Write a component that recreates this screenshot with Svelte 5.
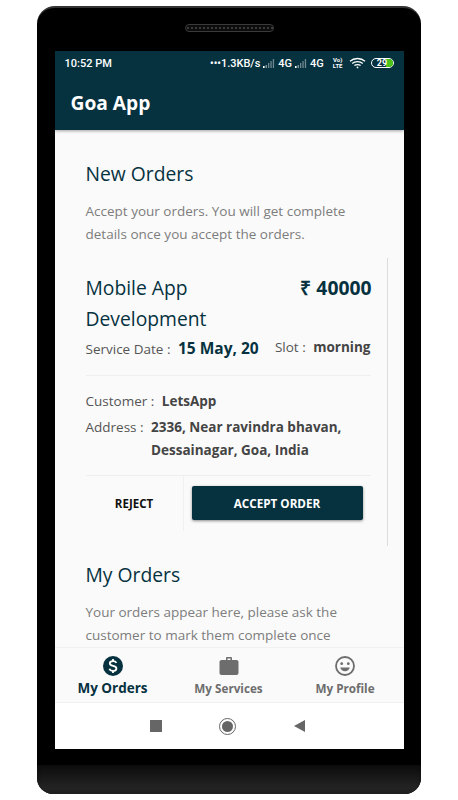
<script>
  const tabs = [
    { label: 'My Orders', icon: 'dollar', active: true },
    { label: 'My Services', icon: 'case', active: false },
    { label: 'My Profile', icon: 'smile', active: false }
  ];
  const bars = [0, 1];
</script>

<div class="page">
  <div class="phone">
    <div class="speaker"></div>
    <div class="screen">
      <header class="appbar">
        <div class="status">
          <span class="time">10:52 PM</span>
          <div class="indicators">
            <span class="speed"><span class="dots">•••</span>1.3KB/s</span>
            {#each bars as b}
              <svg class="signal" width="12" height="11" viewBox="0 0 12 11">
                <rect x="0" y="8" width="1.6" height="2" fill="#fff" />
                <rect x="2.6" y="7" width="1.3" height="3" fill="#8a9ea5" />
                <rect x="5" y="5" width="1.3" height="5" fill="#6f878f" />
                <rect x="7.4" y="3" width="1.3" height="7" fill="#6f878f" />
                <rect x="9.8" y="1" width="1.3" height="9" fill="#6f878f" />
              </svg>
              <span class="net">4G</span>
            {/each}
            <span class="volte">Vo)<br />LTE</span>
            <svg class="wifi" width="17" height="12" viewBox="0 0 17 12" fill="none" stroke="#fff" stroke-width="1.3">
              <path d="M1 4.2 C5 0.6 12 0.6 16 4.2" />
              <path d="M3.2 6.4 C6 4 11 4 13.8 6.4" />
              <path d="M5.4 8.6 C7 7.3 10 7.3 11.6 8.6" />
              <circle cx="8.5" cy="10.4" r="0.9" fill="#fff" stroke="none" />
            </svg>
            <span class="battery"><span class="level"></span><span class="pct">29</span></span>
          </div>
        </div>
        <div class="title">Goa App</div>
      </header>

      <main class="content">
        <h2>New Orders</h2>
        <p class="hint">Accept your orders. You will get complete details once you accept the orders.</p>

        <section class="card">
          <div class="card-head">
            <div class="service">Mobile App Development</div>
            <div class="price">₹ 40000</div>
          </div>
          <div class="dates">
            <span class="field">Service Date : <b class="date">15 May, 20</b></span>
            <span class="field slot">Slot : <b>morning</b></span>
          </div>
          <div class="customer">
            <div class="row"><span class="field">Customer :</span><b>LetsApp</b></div>
            <div class="row address"><span class="field">Address :</span><b>2336, Near ravindra bhavan, Dessainagar, Goa, India</b></div>
          </div>
          <div class="actions">
            <button class="reject">REJECT</button>
            <div class="accept-wrap"><button class="accept">ACCEPT ORDER</button></div>
          </div>
        </section>

        <h2 class="second">My Orders</h2>
        <p class="hint">Your orders appear here, please ask the customer to mark them complete once</p>
      </main>

      <nav class="tabs">
        {#each tabs as tab}
          <div class="tab" class:active={tab.active}>
            {#if tab.icon === 'dollar'}
              <svg width="22" height="22" viewBox="0 0 22 22">
                <circle cx="11" cy="11" r="10" fill="#06323f" />
                <path d="M14.4 7.9 C13.8 6.6 12.6 6.1 11 6.1 C9.2 6.1 7.8 7 7.8 8.5 C7.8 11.6 14.4 10.2 14.4 13.4 C14.4 15 12.9 15.9 11 15.9 C9.2 15.9 7.9 15.1 7.4 13.8" fill="none" stroke="#fff" stroke-width="1.8" />
                <path d="M11 3.9 V18.1" stroke="#fff" stroke-width="1.8" stroke-dasharray="2.4 9.4" />
              </svg>
            {:else if tab.icon === 'case'}
              <svg width="22" height="22" viewBox="0 0 22 22">
                <path d="M8 5 V3.2 C8 2.5 8.5 2 9.2 2 H12.8 C13.5 2 14 2.5 14 3.2 V5 H18.5 C19.6 5 20.5 5.9 20.5 7 V18 C20.5 19.1 19.6 20 18.5 20 H3.5 C2.4 20 1.5 19.1 1.5 18 V7 C1.5 5.9 2.4 5 3.5 5 Z M9.5 5 H12.5 V3.5 H9.5 Z" fill="#6d6d6d" fill-rule="evenodd" />
              </svg>
            {:else}
              <svg width="22" height="22" viewBox="0 0 22 22">
                <circle cx="11" cy="11" r="9" fill="none" stroke="#6d6d6d" stroke-width="1.8" />
                <circle cx="7.7" cy="8.7" r="1.4" fill="#6d6d6d" />
                <circle cx="14.3" cy="8.7" r="1.4" fill="#6d6d6d" />
                <path d="M6.2 12.6 H15.8 C15.2 15 13.3 16.3 11 16.3 C8.7 16.3 6.8 15 6.2 12.6 Z" fill="#6d6d6d" />
              </svg>
            {/if}
            <span>{tab.label}</span>
          </div>
        {/each}
      </nav>

      <div class="softkeys">
        <span class="sq"></span>
        <span class="home"><span></span></span>
        <span class="back"></span>
      </div>
    </div>
    <div class="chin"></div>
  </div>
</div>

<style>
  :global(body) {
    margin: 0;
    background: #fff;
  }

  .page {
    width: 458px;
    height: 800px;
    padding: 6px 0 0 37px;
    box-sizing: border-box;
    font-family: "Open Sans", sans-serif;
  }

  .phone {
    width: 384px;
    height: 788px;
    box-sizing: border-box;
    background: #000;
    border-top: 2px solid #333;
    border-radius: 18px 18px 16px 16px;
    display: flex;
    flex-direction: column;
    align-items: center;
    overflow: hidden;
  }

  .speaker {
    width: 89px;
    height: 8px;
    margin-top: 16px;
    margin-bottom: 19px;
    box-sizing: border-box;
    border: 1px solid #3a3a3a;
    border-radius: 5px;
    background: radial-gradient(circle, #3a3a3a 1px, #0c0c0c 1.4px) 0 0 / 4px 6px;
    flex: none;
  }

  .screen {
    width: 349px;
    height: 698px;
    flex: none;
    background: #fff;
    display: flex;
    flex-direction: column;
  }

  .appbar {
    background: #06323f;
    height: 79px;
    flex: none;
    color: #fff;
    box-shadow: 0 1px 3px rgba(0, 0, 0, 0.35);
    position: relative;
  }

  .status {
    display: flex;
    justify-content: space-between;
    align-items: center;
    height: 24px;
    padding: 0 10px;
    font-family: Roboto, sans-serif;
    font-weight: 500;
  }

  .time {
    font-size: 11px;
  }

  .indicators {
    display: flex;
    align-items: center;
    font-size: 11px;
    gap: 3px;
  }

  .dots {
    font-size: 10px;
    font-weight: 700;
  }

  .volte {
    font-size: 6px;
    line-height: 6px;
    font-weight: 700;
    text-align: center;
    margin: 0 3px 0 6px;
  }

  .wifi {
    margin-right: 2px;
  }

  .battery {
    width: 23px;
    height: 10px;
    box-sizing: border-box;
    border: 1px solid #fff;
    border-radius: 5px;
    position: relative;
    display: flex;
    align-items: center;
    justify-content: center;
    overflow: hidden;
  }

  .level {
    position: absolute;
    top: 0;
    bottom: 0;
    right: 0;
    width: 7px;
    background: #4cc417;
  }

  .pct {
    position: relative;
    font-size: 9px;
    line-height: 9px;
    font-weight: 700;
  }

  .title {
    font-size: 19.2px;
    font-weight: 700;
    line-height: 28px;
    padding: 14px 16px 0;
  }

  .content {
    flex: 1;
    min-height: 0;
    overflow: hidden;
    background: #fafafa;
    padding: 30px 16px 0 31px;
  }

  h2 {
    margin: 0;
    font-size: 19.3px;
    font-weight: 400;
    line-height: 27px;
    color: #06323f;
  }

  .second {
    margin-top: 15px;
  }

  .hint {
    margin: 13px 0 0;
    width: 280px;
    font-size: 13.5px;
    line-height: 22.5px;
    color: #7d7d7d;
  }

  .card {
    margin-top: 13px;
    height: 288px;
    box-sizing: border-box;
    border-right: 1px solid #dcdcdc;
    padding: 14px 16px 0 0;
  }

  .card-head {
    display: flex;
    justify-content: space-between;
    align-items: flex-start;
  }

  .service {
    width: 170px;
    font-size: 19.3px;
    line-height: 31px;
    color: #06323f;
  }

  .price {
    font-size: 19.3px;
    line-height: 31px;
    font-weight: 700;
    color: #06323f;
    margin-right: -1px;
  }

  .dates {
    display: flex;
    justify-content: space-between;
    height: 38px;
    margin-top: 3px;
    border-bottom: 1px solid #efefef;
  }

  .field {
    font-size: 13.5px;
    line-height: 23px;
    color: #555;
    flex: none;
  }

  .field b {
    margin-left: 4px;
    color: #444;
  }

  .field b.date {
    font-size: 15.5px;
    color: #06323f;
  }

  .slot {
    margin-top: -1px;
  }

  .customer {
    padding-top: 14px;
    height: 85px;
    border-bottom: 1px solid #efefef;
  }

  .row {
    display: flex;
    gap: 7.5px;
    font-size: 13.5px;
    line-height: 23px;
  }

  .row b {
    color: #444;
  }

  .address {
    margin-top: 3px;
  }

  .actions {
    display: flex;
    height: 55px;
  }

  .reject {
    width: 98px;
    background: none;
    border: none;
    border-right: 1px solid #f0f0f0;
    font: 700 11.5px "Open Sans", sans-serif;
    color: #111;
    padding: 0;
  }

  .accept-wrap {
    flex: 1;
    padding: 10px 8px 0;
  }

  .accept {
    width: 100%;
    height: 34px;
    background: #06323f;
    color: #fff;
    border: none;
    border-radius: 2px;
    box-shadow: 0 1px 3px rgba(0, 0, 0, 0.45);
    font: 700 11.7px "Open Sans", sans-serif;
  }

  .tabs {
    height: 56px;
    flex: none;
    display: grid;
    grid-template-columns: 116px 116px 117px;
    background: #fafafa;
    border-top: 1px solid #f0f0f0;
    border-bottom: 1px solid #f0f0f0;
    box-sizing: border-box;
  }

  .tab {
    display: flex;
    flex-direction: column;
    align-items: center;
    padding-top: 7px;
    gap: 3px;
    font-size: 11.7px;
    line-height: 16px;
    font-weight: 700;
    color: #6d6d6d;
  }

  .tab.active {
    font-size: 13.5px;
    color: #06323f;
  }

  .softkeys {
    height: 46px;
    flex: none;
    display: flex;
    align-items: center;
    justify-content: center;
    gap: 57.5px;
    padding-right: 4px;
  }

  .sq {
    width: 12px;
    height: 12px;
    background: #666;
  }

  .home {
    width: 17px;
    height: 17px;
    box-sizing: border-box;
    border: 1.5px solid #666;
    border-radius: 50%;
    display: flex;
    align-items: center;
    justify-content: center;
  }

  .home span {
    width: 11px;
    height: 11px;
    border-radius: 50%;
    background: #666;
  }

  .back {
    width: 0;
    height: 0;
    border-top: 6px solid transparent;
    border-bottom: 6px solid transparent;
    border-right: 11px solid #666;
  }

  .chin {
    flex: 1;
    width: 100%;
    margin-top: 16px;
    background: linear-gradient(#0c0c0c, #2a2a2a);
    box-shadow: inset 0 -3px 4px rgba(0, 0, 0, 0.3);
  }
</style>
